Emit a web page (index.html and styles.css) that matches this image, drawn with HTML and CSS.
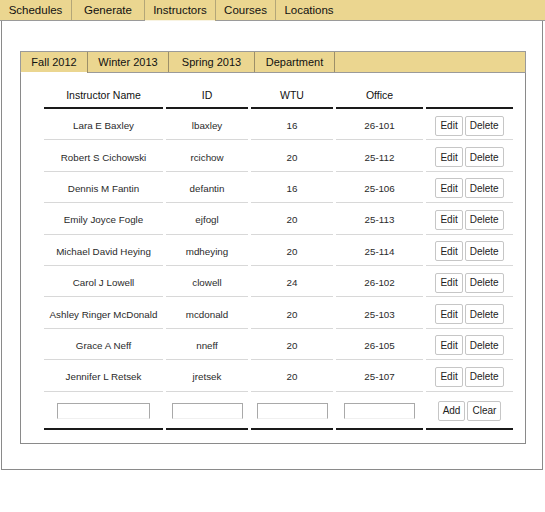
FILE: index.html
```html
<!DOCTYPE html>
<html>
<head>
<meta charset="utf-8">
<link rel="stylesheet" href="styles.css">
</head>
<body>
<div class="topnav">
  <div class="ttab t1">Schedules</div>
  <div class="ttab t2">Generate</div>
  <div class="ttab t3 active">Instructors</div>
  <div class="ttab t4">Courses</div>
  <div class="ttab t5">Locations</div>
</div>
<div class="outer">
  <div class="itabs">
    <div class="itab active">Fall 2012</div>
    <div class="itab">Winter 2013</div>
    <div class="itab">Spring 2013</div>
    <div class="itab">Department</div>
  </div>
  <div class="inner">
    <table class="grid">
      <colgroup><col class="c1"><col class="c2"><col class="c3"><col class="c4"><col class="c5"></colgroup>
      <thead>
        <tr><th>Instructor Name</th><th>ID</th><th>WTU</th><th>Office</th><th></th></tr>
      </thead>
      <tbody>
        <tr><td>Lara E Baxley</td><td>lbaxley</td><td>16</td><td>26-101</td><td><div class="acts"><button>Edit</button><button>Delete</button></div></td></tr>
        <tr><td>Robert S Cichowski</td><td>rcichow</td><td>20</td><td>25-112</td><td><div class="acts"><button>Edit</button><button>Delete</button></div></td></tr>
        <tr><td>Dennis M Fantin</td><td>defantin</td><td>16</td><td>25-106</td><td><div class="acts"><button>Edit</button><button>Delete</button></div></td></tr>
        <tr><td>Emily Joyce Fogle</td><td>ejfogl</td><td>20</td><td>25-113</td><td><div class="acts"><button>Edit</button><button>Delete</button></div></td></tr>
        <tr><td>Michael David Heying</td><td>mdheying</td><td>20</td><td>25-114</td><td><div class="acts"><button>Edit</button><button>Delete</button></div></td></tr>
        <tr><td>Carol J Lowell</td><td>clowell</td><td>24</td><td>26-102</td><td><div class="acts"><button>Edit</button><button>Delete</button></div></td></tr>
        <tr><td>Ashley Ringer McDonald</td><td>mcdonald</td><td>20</td><td>25-103</td><td><div class="acts"><button>Edit</button><button>Delete</button></div></td></tr>
        <tr><td>Grace A Neff</td><td>nneff</td><td>20</td><td>26-105</td><td><div class="acts"><button>Edit</button><button>Delete</button></div></td></tr>
        <tr><td>Jennifer L Retsek</td><td>jretsek</td><td>20</td><td>25-107</td><td><div class="acts"><button>Edit</button><button>Delete</button></div></td></tr>
      </tbody>
      <tfoot>
        <tr>
          <td><input class="in w1" type="text"></td>
          <td><input class="in w2" type="text"></td>
          <td><input class="in w2" type="text"></td>
          <td><input class="in w2" type="text"></td>
          <td><div class="acts"><button>Add</button><button>Clear</button></div></td>
        </tr>
      </tfoot>
    </table>
  </div>
</div>
</body>
</html>
```
FILE: styles.css
```css
html, body {
  margin: 0;
  padding: 0;
  background: #fff;
  font-family: "Liberation Sans", Arial, sans-serif;
  color: #111;
}

.topnav {
  display: flex;
  height: 20px;
  background: #ebd690;
  border-bottom: 1px solid #9a9a9a;
  font-size: 11.5px;
}
.ttab {
  box-sizing: border-box;
  line-height: 20px;
  text-align: center;
  border-right: 1px solid #b3a678;
  color: #111;
}
.t1 { width: 72px; }
.t2 { width: 73px; }
.t3 { width: 71px; }
.t4 { width: 60px; }
.t5 { width: 66px; border-right: none; }
.ttab.active {
  height: 21px;
  background: linear-gradient(#ebd690 0, #ebd690 20px, #f8f3e2 20px);
}

.outer {
  margin-left: 1px;
  width: 542px;
  height: 449px;
  box-sizing: border-box;
  border: 1px solid #8a8a8a;
  border-top: none;
  padding: 30px 16px 0 18px;
}

.itabs {
  display: flex;
  height: 20px;
  background: #ebd690;
  border: 1px solid #9a9a9a;
  font-size: 11px;
}
.itab {
  line-height: 20px;
  text-align: center;
  border-right: 1px solid #9c8f68;
  color: #111;
}
.itab:nth-child(1) { width: 66px; }
.itab:nth-child(2) { width: 80px; }
.itab:nth-child(3) { width: 85px; }
.itab:nth-child(4) { width: 79px; }
.itab.active {
  height: 21px;
  background: linear-gradient(#ebd690 0, #ebd690 20px, #fff 20px);
}

.inner {
  box-sizing: border-box;
  height: 371px;
  border: 1px solid #8a8a8a;
  border-top: none;
  padding: 10px 0 0 20px;
}

.grid {
  table-layout: fixed;
  border-collapse: separate;
  border-spacing: 3px 0;
  width: 475px;
  font-size: 9.8px;
}
.c1 { width: 119px; }
.c2 { width: 82px; }
.c3 { width: 82px; }
.c4 { width: 87px; }
.c5 { width: 87px; }

.grid th {
  font-weight: normal;
  font-size: 10.5px;
  color: #111;
  height: 24px;
  padding: 0;
  border-bottom: 2px solid #1a1a1a;
  text-align: center;
  vertical-align: middle;
}
.grid tbody td {
  height: 31.4px;
  padding: 3px 0 0 0;
  box-sizing: border-box;
  text-align: center;
  vertical-align: middle;
  color: #2a2a2a;
  border-bottom: 1px solid #d8d8d8;
}
.grid tfoot td {
  height: 38px;
  padding: 2px 0 0 0;
  box-sizing: border-box;
  text-align: center;
  vertical-align: middle;
  border-bottom: 2px solid #1a1a1a;
}

.acts {
  display: flex;
  justify-content: center;
  gap: 2px;
}
.acts button {
  height: 20px;
  padding: 0 4px;
  background: #fff;
  border: 1px solid #c6c6c6;
  border-radius: 2px;
  font-family: "Liberation Sans", Arial, sans-serif;
  font-size: 10px;
  color: #222;
}

.in {
  box-sizing: border-box;
  height: 16px;
  padding: 0;
  margin: 0;
  border: 1px solid #a9a9a9;
  border-bottom-color: #f0f0f0;
  border-radius: 0;
  background: #fff;
  vertical-align: middle;
}
.in.w1 { width: 93px; }
.in.w2 { width: 71px; }
```
